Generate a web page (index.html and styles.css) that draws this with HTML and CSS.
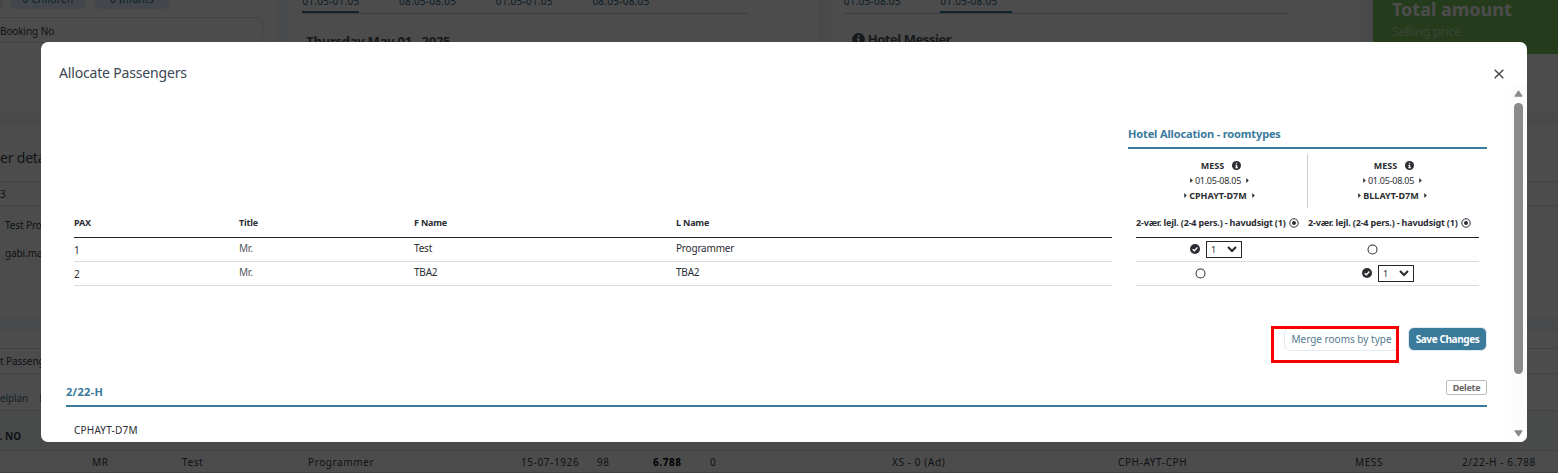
FILE: index.html
```html
<!DOCTYPE html>
<html lang="en">
<head>
<meta charset="utf-8">
<title>Allocate Passengers</title>
<link rel="stylesheet" href="styles.css">
</head>
<body>
<svg class="defs" width="0" height="0">
  <symbol id="info" viewBox="0 0 16 16"><circle cx="8" cy="8" r="8" fill="currentColor"/><path class="knock" d="M6.9 2.9h2.4v2.2H6.9zM5.9 6.6h3.4v4.6h1.2v1.7H5.7v-1.7h1.2V8.3h-1z"/></symbol>
  <symbol id="check" viewBox="0 0 16 16"><circle cx="8" cy="8" r="8" fill="currentColor"/><path d="M4.2 8.3l2.7 2.5 5-5.2" fill="none" stroke="#fff" stroke-width="2"/></symbol>
  <symbol id="ring" viewBox="0 0 12 12"><circle cx="6" cy="6" r="4.9" fill="none" stroke="currentColor" stroke-width="1.1"/></symbol>
  <symbol id="dot" viewBox="0 0 10 10"><circle cx="5" cy="5" r="4.2" fill="none" stroke="currentColor" stroke-width="1"/><circle cx="5" cy="5" r="2" fill="currentColor"/></symbol>
  <symbol id="caret" viewBox="0 0 3 6"><path d="M0 0l3 3-3 3z" fill="currentColor"/></symbol>
  <symbol id="chev" viewBox="0 0 10 7"><path d="M1 1l4 4 4-4" fill="none" stroke="currentColor" stroke-width="2.2"/></symbol>
</svg>

<div class="page">
  <div class="top">
    <div class="card search">
      <div class="chips"><span class="chip first"></span><span class="chip">0 Children</span><span class="chip">0 Infants</span></div>
      <div class="field">Booking No</div>
    </div>
    <div class="card trip">
      <div class="tabs"><span class="tab on">01.05-01.05</span><span class="tab">08.05-08.05</span><span class="tab">01.05-01.05</span><span class="tab">08.05-08.05</span></div>
      <div class="heading">Thursday May 01 . 2025</div>
    </div>
    <div class="card stay">
      <div class="tabs"><span class="tab">01.05-08.05</span><span class="tab on wide">01.05-08.05</span></div>
      <div class="heading hotel"><svg width="13" height="13"><use href="#info"/></svg><span>Hotel Messier</span></div>
    </div>
    <div class="amount"><div class="total"><strong>Total amount</strong><span>Selling price</span></div></div>
  </div>
  <div class="card details">
    <h2>er details</h2>
    <div class="line-field">3</div>
    <p>Test Programmer</p>
    <p>gabi.ma</p>
  </div>
  <div class="card pax">
    <div class="line-field paxhead">t Passengers</div>
    <div class="links"><span>elplan</span><span>H</span></div>
    <div class="thead">L. NO</div>
    <div class="trow"><span>MR</span><span>Test</span><span>Programmer</span><span>15-07-1926</span><span>98</span><b>6.788</b><span>0</span><span>XS - 0 (Ad)</span><span>CPH-AYT-CPH</span><span>MESS</span><span>2/22-H - 6.788</span></div>
  </div>
</div>

<div class="overlay">
  <div class="modal">
    <header class="modal-head">
      <h1>Allocate Passengers</h1>
      <svg class="close" width="10" height="10" viewBox="0 0 10 10"><path d="M.7.7l8.6 8.6M9.3.7L.7 9.3" stroke="#444" stroke-width="1.4"/></svg>
    </header>
    <div class="modal-main">
      <div class="content">
        <div class="allocation">
          <div class="people">
            <div class="row head"><span>PAX</span><span>Title</span><span>F Name</span><span>L Name</span></div>
            <div class="row"><span class="num">1</span><span class="soft">Mr.</span><span>Test</span><span>Programmer</span></div>
            <div class="row"><span class="num">2</span><span class="soft">Mr.</span><span>TBA2</span><span>TBA2</span></div>
          </div>
          <div class="rooms">
            <h3>Hotel Allocation - roomtypes</h3>
            <div class="hotels">
              <div class="hotel-col">
                <div class="name"><b>MESS</b><svg width="9" height="9"><use href="#info"/></svg></div>
                <div class="dates"><svg width="3" height="5"><use href="#caret"/></svg><span>01.05-08.05</span><svg width="3" height="5"><use href="#caret"/></svg></div>
                <div class="code"><svg width="3" height="5"><use href="#caret"/></svg><b>CPHAYT-D7M</b><svg width="3" height="5"><use href="#caret"/></svg></div>
              </div>
              <div class="hotel-col">
                <div class="name"><b>MESS</b><svg width="9" height="9"><use href="#info"/></svg></div>
                <div class="dates"><svg width="3" height="5"><use href="#caret"/></svg><span>01.05-08.05</span><svg width="3" height="5"><use href="#caret"/></svg></div>
                <div class="code"><svg width="3" height="5"><use href="#caret"/></svg><b>BLLAYT-D7M</b><svg width="3" height="5"><use href="#caret"/></svg></div>
              </div>
            </div>
            <div class="types">
              <div class="type-row head"><div><span>2-vær. lejl. (2-4 pers.) - havudsigt (1)</span><svg width="10" height="10"><use href="#dot"/></svg></div><div><span>2-vær. lejl. (2-4 pers.) - havudsigt (1)</span><svg width="10" height="10"><use href="#dot"/></svg></div></div>
              <div class="type-row"><div class="picked"><svg class="tick" width="10" height="10"><use href="#check"/></svg><span class="select">1<svg width="10" height="7"><use href="#chev"/></svg></span></div><div class="open"><svg width="11" height="11"><use href="#ring"/></svg></div></div>
              <div class="type-row"><div class="open"><svg width="11" height="11"><use href="#ring"/></svg></div><div class="picked"><svg class="tick" width="10" height="10"><use href="#check"/></svg><span class="select">1<svg width="10" height="7"><use href="#chev"/></svg></span></div></div>
            </div>
          </div>
        </div>
        <div class="actions"><div class="merge-wrap"><span class="btn merge">Merge rooms by type</span><i class="marker"></i></div><span class="btn save">Save Changes</span></div>
        <div class="group"><h3>2/22-H</h3><span class="delete">Delete</span></div>
        <div class="group-code">CPHAYT-D7M</div>
      </div>
      <div class="scrollbar">
        <svg width="9" height="7" viewBox="0 0 9 7"><path d="M4.5.8L8.2 6.2H.8z" fill="#8a8a8a" stroke="#8a8a8a" stroke-linejoin="round"/></svg>
        <div class="thumb"></div>
        <svg width="9" height="7" viewBox="0 0 9 7"><path d="M4.5 6.2L8.2.8H.8z" fill="#8a8a8a" stroke="#8a8a8a" stroke-linejoin="round"/></svg>
      </div>
    </div>
  </div>
</div>
</body>
</html>
```
FILE: styles.css
```css
* { box-sizing: border-box; }
body { margin: 0; height: 473px; overflow: hidden; position: relative; font: 10px/16px "Noto Sans", "Open Sans", sans-serif; color: #2b2d33; white-space: nowrap; }
h1, h2, h3, p { margin: 0; font-weight: 400; }
svg { display: block; flex: none; }
.defs { position: absolute; }
.knock { fill: #fff; }

.page { height: 473px; overflow: hidden; background: #eff4fb; display: flex; flex-direction: column; gap: 13px; color: #33414d; }
.card { background: #fff; }
.top { height: 113px; display: grid; grid-template-columns: 277px 529px 530px 185px; column-gap: 12.33px; flex: none; }
.search { overflow: hidden; }
.chips { display: flex; gap: 8px; height: 9px; }
.chip { width: 76px; height: 18px; margin-top: -9px; border-radius: 6px; background: #dfeefa; text-align: center; line-height: 16px; color: #2a6687; letter-spacing: .3px; }
.chip.first { width: 2px; border-radius: 0 6px 6px 0; }
.field { margin: 8px 0 0 -10px; width: 273px; height: 26px; padding-left: 9px; border: 1px solid #dedede; border-radius: 6px; line-height: 26px; letter-spacing: -.1px; }
.trip, .stay { padding: 0 0 0 13px; overflow: hidden; }
.tabs { display: flex; gap: 39.7px; width: 446px; height: 14px; border-bottom: 1px solid #ccc; }
.tab { width: 57px; height: 13px; line-height: 0; padding-top: 1px; color: #2a5f80; letter-spacing: .25px; }
.tab.on { border-bottom: 2px solid #3a7a9b; }
.tab.wide { width: 72px; }
.heading { margin: 18px 0 0 4px; font-size: 13px; font-weight: 700; line-height: 18px; color: #4c5560; letter-spacing: -.25px; }
.hotel { display: flex; align-items: center; gap: 3px; margin: 16px 0 0 8px; letter-spacing: -.45px; }
.amount { background: #fff; }
.total { height: 54px; background: #7bc85d; padding-left: 19px; display: flex; flex-direction: column; color: #fff; }
.total strong { font-size: 18px; line-height: 20px; margin-top: -1px; }
.total span { font-size: 13px; line-height: 20px; margin-top: 2px; opacity: .5; letter-spacing: -.4px; }
.details { height: 192px; flex: none; }
.details h2 { font-size: 14px; line-height: 22px; padding-top: 21px; height: 55px; letter-spacing: -.2px; }
.line-field { height: 25px; line-height: 24px; border: solid #dedede; border-width: 1px 0; }
.details p { padding: 5px 0 0 5px; line-height: 28px; height: 28px; letter-spacing: -.1px; }
.pax { flex: 1; padding-top: 17px; }
.paxhead { height: 26px; letter-spacing: -.1px; }
.links { display: flex; gap: 11px; height: 37px; line-height: 49px; border-bottom: 1px solid #ddd; color: #4c6f87; letter-spacing: -.1px; }
.thead { height: 40px; line-height: 50px; background: #f3fbf8; border-bottom: 1px solid #d9dfdc; font-weight: 700; text-indent: -6px; }
.trow { display: grid; grid-template-columns: 90px 126px 213px 76px 56px 57px 182px 226px 237px 107px auto; padding-left: 92px; line-height: 23px; height: 22px; letter-spacing: .6px; border-bottom: 1px solid #ddd; }
.trow b { color: #000; }

.overlay { position: absolute; inset: 0; background: rgba(0, 0, 0, .7); padding: 42px 31px 31px 41px; }
.modal { height: 400px; background: #fff; border-radius: 7px; overflow: hidden; display: flex; flex-direction: column; }
.modal-head { height: 43px; flex: none; display: flex; justify-content: space-between; padding: 20px 23px 0 18px; }
.modal-head h1 { font-size: 14px; line-height: 22px; color: #3b4652; letter-spacing: -.17px; }
.close { margin-top: 7px; }
.modal-main { flex: 1; min-height: 0; display: flex; }
.content { flex: 1; padding: 34px 24px 0 25px; overflow: hidden; }
.allocation { display: flex; align-items: flex-end; justify-content: space-between; }
.people { width: 1038px; margin-left: 8px; }
.row { display: grid; grid-template-columns: 165px 175px 262px 1fr; height: 24px; line-height: 21px; border-bottom: 1px solid #dcdcdc; letter-spacing: -.2px; }
.row.head, .type-row.head { height: 30px; line-height: 30px; font-size: 9px; font-weight: 700; border-bottom-color: #25262c; letter-spacing: -.18px; }
.num { line-height: 24px; }
.soft { color: #55585e; }
.rooms { width: 359px; }
h3 { height: 30px; line-height: 29px; font-size: 11px; font-weight: 700; color: #3a7a9b; border-bottom: 2px solid #3a7a9b; letter-spacing: -.14px; }
.hotels { display: grid; grid-template-columns: 180px 179px; margin-top: 5px; height: 54px; font-size: 9px; line-height: 15px; }
.hotel-col { padding: 4px 0 0 4px; }
.hotel-col:first-child { border-right: 1px solid #ccc; }
.hotel-col + .hotel-col { padding: 4px 10px 0 0; }
.hotel-col div { display: flex; justify-content: center; align-items: center; gap: 2px; height: 15px; }
.hotel-col .name { gap: 8px; padding-left: 3px; }
.hotel-col svg + span, .hotel-col svg + b { margin-right: 3px; }
.dates { letter-spacing: -.25px; }
.types { margin: 0 8px; }
.type-row { display: grid; grid-template-columns: 172px 171px; height: 24px; border-bottom: 1px solid #dcdcdc; }
.type-row div { display: flex; align-items: center; }
.type-row.head div { gap: 3px; }
.type-row .open { padding-left: 59px; }
.type-row .picked { padding-left: 54px; gap: 6px; }
.tick { margin-bottom: 2px; }
.select { width: 36px; height: 17px; border: 1px solid #25262c; display: flex; align-items: center; justify-content: space-between; padding: 0 4px; font-size: 9px; }
.actions { display: flex; justify-content: flex-end; gap: 9px; margin-top: 41px; height: 24px; }
.merge-wrap { position: relative; }
.btn { display: block; height: 24px; line-height: 23px; border: 1px solid #dfeaf2; border-radius: 6px; text-align: center; }
.merge { width: 115px; color: #54798f; }
.save { width: 79px; background: #3a7a9b; color: #fff; font-weight: 700; letter-spacing: -.4px; }
.marker { position: absolute; left: -13px; top: -1px; width: 128px; height: 37px; border: 3px solid #f80000; }
.group { display: flex; justify-content: space-between; align-items: flex-start; margin-top: 29px; height: 27px; border-bottom: 2px solid #3a7a9b; }
.group h3 { border: 0; line-height: 24px; letter-spacing: .3px; }
.delete { width: 41px; height: 15px; border: 1px solid #bbb; border-radius: 2px; font-size: 9px; line-height: 13px; font-weight: 700; color: #666; text-align: center; letter-spacing: -.3px; }
.group-code { padding: 15px 0 0 8px; letter-spacing: .2px; }
.scrollbar { width: 16px; background: #fcfcfc; display: flex; flex-direction: column; padding: 5px 4px 5px 3px; }
.thumb { width: 9px; height: 271px; margin: 6px 0 auto; border-radius: 5px; background: #8a8a8a; }
```
